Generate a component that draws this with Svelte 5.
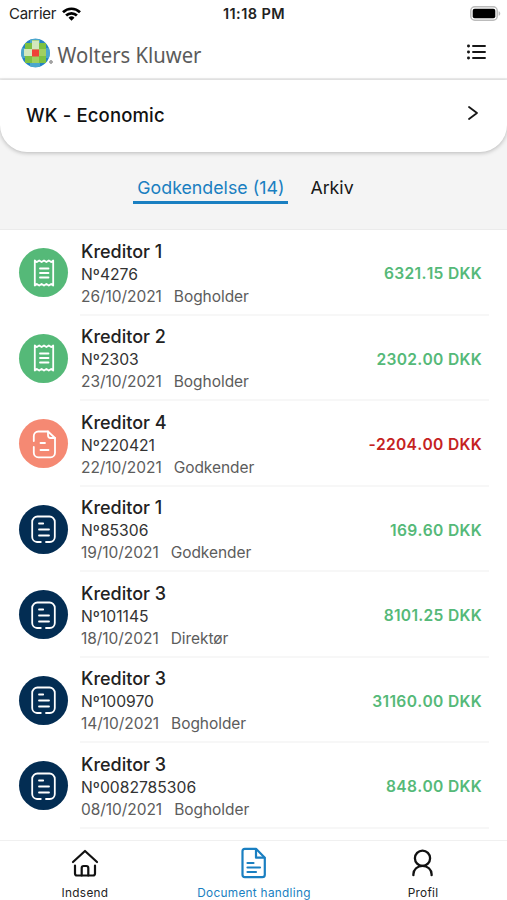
<script lang="ts">
	type Kind = 'receipt' | 'credit' | 'invoice';

	interface Entry {
		kind: Kind;
		name: string;
		number: string;
		date: string;
		role: string;
		amount: string;
	}

	const entries: Entry[] = [
		{ kind: 'receipt', name: 'Kreditor 1', number: '4276', date: '26/10/2021', role: 'Bogholder', amount: '6321.15' },
		{ kind: 'receipt', name: 'Kreditor 2', number: '2303', date: '23/10/2021', role: 'Bogholder', amount: '2302.00' },
		{ kind: 'credit', name: 'Kreditor 4', number: '220421', date: '22/10/2021', role: 'Godkender', amount: '-2204.00' },
		{ kind: 'invoice', name: 'Kreditor 1', number: '85306', date: '19/10/2021', role: 'Godkender', amount: '169.60' },
		{ kind: 'invoice', name: 'Kreditor 3', number: '101145', date: '18/10/2021', role: 'Direktør', amount: '8101.25' },
		{ kind: 'invoice', name: 'Kreditor 3', number: '100970', date: '14/10/2021', role: 'Bogholder', amount: '31160.00' },
		{ kind: 'invoice', name: 'Kreditor 3', number: '0082785306', date: '08/10/2021', role: 'Bogholder', amount: '848.00' }
	];
</script>

<div class="screen">
	<div class="status">
		<div class="carrier">
			<span>Carrier</span>
			<svg width="19" height="14" viewBox="0 0 19 14" fill="none" stroke="#000" stroke-width="2.7">
				<path d="M1 5.2a12.2 12.2 0 0 1 17 0" />
				<path d="M4.1 8.5a7.7 7.7 0 0 1 10.8 0" />
				<path d="M6.5 10.7a4.3 4.3 0 0 1 6 0l-3 3z" fill="#000" stroke="none" />
			</svg>
		</div>
		<span class="time">11:18 PM</span>
		<svg class="battery" width="31" height="15" viewBox="0 0 31 15">
			<rect x="0.8" y="0.8" width="26.4" height="13.4" rx="4" fill="#fff" stroke="#bbb" stroke-width="1.5" />
			<rect x="2.7" y="2.7" width="22.6" height="9.6" rx="2" fill="#000" />
			<path d="M28.6 5.2c2.2.7 2.2 3.9 0 4.6z" fill="#bbb" />
		</svg>
	</div>

	<header class="header">
		<svg class="brand" width="190" height="44" viewBox="0 0 190 44">
			<defs>
				<clipPath id="globe"><circle cx="14.5" cy="16" r="14.3" /></clipPath>
			</defs>
			<g transform="translate(0 7)">
				<g clip-path="url(#globe)">
					<rect y="1" width="29" height="30" fill="#2583c5" />
					<path d="M9 1h10v5H9zM9 26h10v5H9zM0 11h4v10H0zM25 11h4v10h-4z" fill="#4ba7cc" />
					<path d="M4 6h21v20H4z" fill="#7cc142" />
					<path d="M11 3h7v8h-7z" fill="#a8d387" />
					<path d="M11 6h7v20h-7zM5 12h20v7H5z" fill="#b5da8c" />
					<path d="M3 12h8v7H3zM11 4h7v8h-7z" fill="#d3e8bd" />
					<path d="M18 12h7v7h-7zM11 19h7v7h-7z" fill="#a0d05f" />
					<path d="M11 12.5h7v7h-7z" fill="#ef4038" />
				</g>
			</g>
			<circle cx="30" cy="32" r="1.4" fill="#b5b5b5" stroke="#858585" stroke-width="0.8" />
			<text x="36.5" y="33" textLength="144" lengthAdjust="spacingAndGlyphs">Wolters Kluwer</text>
		</svg>
		<svg width="20" height="18" viewBox="0 0 20 18" stroke="#171717" stroke-width="1.9" stroke-linecap="round">
			<path d="M6 3h12M6 9h12M6 15h12" />
			<path d="M1.4 3h.2M1.4 9h.2M1.4 15h.2" stroke-width="2.8" />
		</svg>
	</header>

	<div class="top">
		<div class="company">
			<span>WK - Economic</span>
			<svg width="12" height="16" viewBox="0 0 12 16" fill="none" stroke="#171717" stroke-width="1.8" stroke-linecap="round" stroke-linejoin="round">
				<path d="M2 2l8 6-8 6" />
			</svg>
		</div>
		<div class="tabs">
			<span class="tab active">Godkendelse (14)</span>
			<span class="tab">Arkiv</span>
		</div>
	</div>

	<div class="list">
		{#each entries as entry}
			<div class="row">
				<div class="badge {entry.kind}">
					<svg width="30" height="30" viewBox="0 0 30 30" fill="none" stroke="#fff" stroke-width="1.8" stroke-linecap="round" stroke-linejoin="round">
						{#if entry.kind === 'receipt'}
							<path d="M5.8 2.5l2 1.6 2.4-1.6 2.4 1.6L15 2.5l2.4 1.6 2.4-1.6 2.4 1.6 2-1.6v25l-2-1.6-2.4 1.6-2.4-1.6-2.4 1.6-2.4-1.6-2.4 1.6-2.4-1.6-2 1.6z" />
							<path d="M11 10.5h8.5M11 15h8.5M11 19.5h8.5" />
						{:else if entry.kind === 'credit'}
							<path d="M4.8 12V7a4.5 4.5 0 0 1 4.500-4.500h9.700l7 6.500v14.800a4.500 4.500 0 0 1-4.500 4.500H9.300a4.500 4.500 0 0 1-4.500-4.500V18" />
							<path d="M19 2.500v3.700q0 2.800 2.800 2.800H26M11.500 14H16M11.500 21h8" />
						{:else}
							<path d="M8 28a5 5 0 0 1-4.800-5V7.800a5.300 5.300 0 0 1 5.300-5.300h12a5.300 5.300 0 0 1 5.300 5.300V23a5 5 0 0 1-5 5H17M8 28h3.800" />
							<path d="M10 9.500h4.200M10 15.500h10M10 21.500h10" />
						{/if}
					</svg>
				</div>
				<div class="info">
					<div class="details">
						<span class="name">{entry.name}</span>
						<span class="number">Nº{entry.number}</span>
						<div class="meta">
							<span>{entry.date}</span>
							<span>{entry.role}</span>
						</div>
					</div>
					<span class="amount" class:negative={entry.amount.startsWith('-')}>{entry.amount} DKK</span>
				</div>
			</div>
		{/each}
	</div>

	<nav class="nav">
		<div class="nav-item">
			<svg width="32" height="32" viewBox="0 0 32 32" fill="none" stroke="#111" stroke-width="2.2" stroke-linecap="round" stroke-linejoin="round">
				<path d="M4 15L16 4l12 11" />
				<path d="M6 18.5v8q0 2 2 2h16q2 0 2-2v-8" />
				<path d="M12.7 28.5V21q0-2 2-2h2.6q2 0 2 2v7.5" />
			</svg>
			<span>Indsend</span>
		</div>
		<div class="nav-item current">
			<svg width="32" height="32" viewBox="0 0 32 32" fill="none" stroke="#1a7fc1" stroke-width="2.2" stroke-linecap="round" stroke-linejoin="round">
				<path d="M6.8 1.8H18l8.8 8.9v17q0 2.5-2.5 2.5H6.8q-2.3 0-2.3-2.5V4.3q0-2.5 2.3-2.5z" />
				<path d="M18 2.5v8.2h8.3M9.5 16h6M9.5 20.5H22M9.5 25H18" />
			</svg>
			<span>Document handling</span>
		</div>
		<div class="nav-item">
			<svg width="32" height="32" viewBox="0 0 32 32" fill="none" stroke="#111" stroke-width="2.3" stroke-linecap="round">
				<circle cx="15.5" cy="11.2" r="7.6" />
				<path d="M6.4 28.2v-1a9.1 8.4 0 0 1 18.2 0v1" />
			</svg>
			<span>Profil</span>
		</div>
	</nav>
</div>

<style>
	:global(body) {
		background: #fff;
	}

	.screen {
		display: flex;
		flex-direction: column;
		width: 507px;
		height: 900px;
		overflow: hidden;
		background: #fff;
		color: #222;
		font-family: Inter, 'Liberation Sans', sans-serif;
	}

	.status {
		display: grid;
		grid-template-columns: 1fr auto 1fr;
		align-items: center;
		height: 27px;
		padding: 0 6px 0 9px;
		font-size: 15px;
		box-sizing: border-box;
	}

	.carrier {
		display: flex;
		align-items: center;
		gap: 6px;
		letter-spacing: -0.3px;
	}

	.time {
		margin-right: 2px;
		font-size: 14.5px;
		font-weight: 600;
		letter-spacing: 0.4px;
	}

	.battery {
		justify-self: end;
	}

	.header {
		display: flex;
		align-items: center;
		justify-content: space-between;
		height: 53px;
		padding: 0 20px 2px 21px;
		border-bottom: 2px solid #efefef;
		box-sizing: border-box;
	}

	.brand text {
		font-family: 'Noto Sans', sans-serif;
		font-size: 22px;
		fill: #5b5b5b;
	}

	.top {
		height: 150px;
		background: #f4f4f4;
		border-bottom: 1px solid #ebebeb;
		box-sizing: border-box;
	}

	.company {
		display: flex;
		align-items: center;
		justify-content: space-between;
		height: 72px;
		padding: 0 28px 2px 26px;
		border-radius: 0 0 27px 27px;
		background: #fff;
		box-shadow: 0 1px 4px rgba(0, 0, 0, 0.25);
		box-sizing: border-box;
		font-size: 18.5px;
		font-weight: 500;
		letter-spacing: 0.15px;
		color: #111;
	}

	.company svg {
		margin-top: -4px;
	}

	.tabs {
		display: flex;
		justify-content: center;
		gap: 18px;
		margin: 19px 0 0 -16px;
	}

	.tab {
		height: 33px;
		padding: 0 4px;
		box-sizing: border-box;
		line-height: 33px;
		font-size: 17.8px;
		color: #171717;
	}

	.tab.active {
		color: #1a7fc1;
		border-bottom: 3px solid #1a7fc1;
	}

	.list {
		flex: 1;
		min-height: 0;
	}

	.row {
		display: flex;
		align-items: center;
		gap: 12px;
		height: 85.5px;
		padding: 0 18px 0 19px;
	}

	.badge {
		display: flex;
		align-items: center;
		justify-content: center;
		flex: none;
		width: 49px;
		height: 49px;
		border-radius: 50%;
	}

	.receipt {
		background: #55b978;
	}

	.credit {
		background: #f58973;
	}

	.invoice {
		background: #032d53;
	}

	.info {
		display: flex;
		align-items: center;
		justify-content: space-between;
		flex: 1;
		height: 100%;
		padding-right: 7px;
		border-bottom: 2px solid #f7f7f7;
		box-sizing: border-box;
	}

	.details {
		display: flex;
		flex-direction: column;
		padding: 3px 0 0 1px;
	}

	.name {
		font-size: 18px;
		font-weight: 500;
		line-height: 24px;
	}

	.number {
		font-size: 15.7px;
		line-height: 22px;
		color: #333;
	}

	.meta {
		display: flex;
		gap: 12px;
		font-size: 15.5px;
		line-height: 21px;
		letter-spacing: -0.05px;
		color: #5c5c5c;
	}

	.amount {
		padding-top: 4px;
		font-size: 15.6px;
		font-weight: 600;
		font-kerning: none;
		letter-spacing: 0.3px;
		color: #55b978;
	}

	.amount.negative {
		color: #c5221f;
	}

	.nav {
		display: grid;
		grid-template-columns: repeat(3, 1fr);
		height: 60px;
		border-top: 1px solid #f0f0f0;
		box-sizing: border-box;
		background: #fff;
	}

	.nav-item {
		display: flex;
		flex-direction: column;
		align-items: center;
		padding-top: 6px;
		font-size: 11.8px;
		line-height: 16px;
		letter-spacing: 0.3px;
	}

	.nav-item span {
		margin: 6px 0 0 1px;
	}

	.current {
		color: #1a7fc1;
	}
</style>
